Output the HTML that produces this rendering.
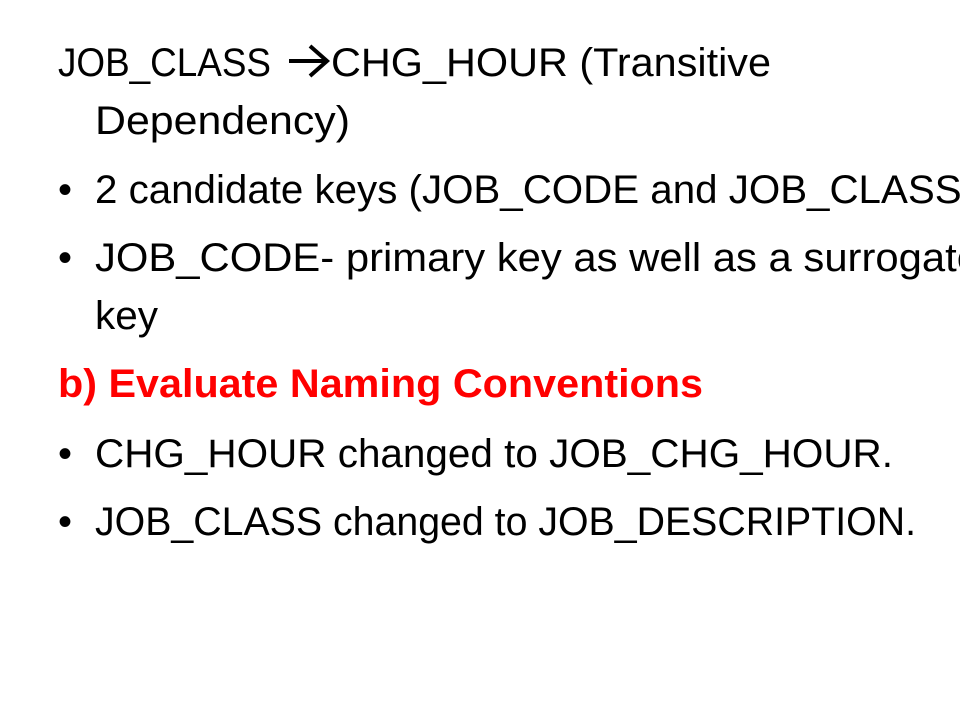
<!DOCTYPE html>
<html><head><meta charset="utf-8"><style>
html,body{margin:0;padding:0;background:#fff;width:960px;height:720px;overflow:hidden}
svg text{font-family:"Liberation Sans",sans-serif;font-size:40px;fill:#000}
</style></head><body>
<svg width="960" height="720" xmlns="http://www.w3.org/2000/svg">
<text x="58" y="76" textLength="213" lengthAdjust="spacingAndGlyphs">JOB_CLASS</text>
<path d="M289 61 H326 M310 46 L327 61 L310 76" stroke="#000" stroke-width="4" fill="none"/>
<text x="331" y="76" textLength="440" lengthAdjust="spacingAndGlyphs">CHG_HOUR (Transitive</text>
<text x="95" y="134" textLength="255" lengthAdjust="spacingAndGlyphs">Dependency)</text>
<text x="58" y="203">•</text>
<text x="95" y="203" textLength="880" lengthAdjust="spacingAndGlyphs">2 candidate keys (JOB_CODE and JOB_CLASS)</text>
<text x="58" y="271">•</text>
<text x="95" y="271" textLength="885" lengthAdjust="spacingAndGlyphs">JOB_CODE- primary key as well as a surrogate</text>
<text x="95" y="329" textLength="63" lengthAdjust="spacingAndGlyphs">key</text>
<text x="58" y="397" textLength="645" lengthAdjust="spacingAndGlyphs" style="fill:#ff0000;font-weight:bold">b) Evaluate Naming Conventions</text>
<text x="58" y="467">•</text>
<text x="95" y="467" textLength="798" lengthAdjust="spacingAndGlyphs">CHG_HOUR changed to JOB_CHG_HOUR.</text>
<text x="58" y="535">•</text>
<text x="95" y="535" textLength="821" lengthAdjust="spacingAndGlyphs">JOB_CLASS changed to JOB_DESCRIPTION.</text>
</svg>
</body></html>
